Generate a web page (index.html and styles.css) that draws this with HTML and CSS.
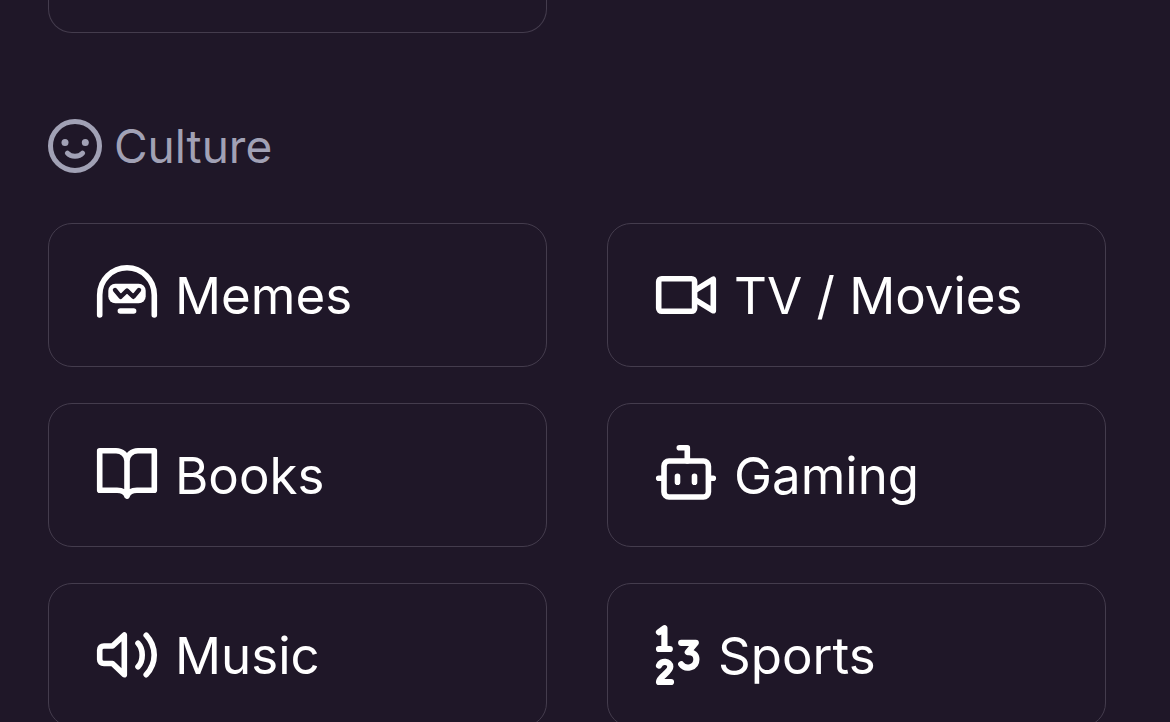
FILE: index.html
```html
<!DOCTYPE html>
<html lang="en">
<head>
<meta charset="utf-8">
<meta name="viewport" content="width=device-width, initial-scale=1">
<title>Culture</title>
<link rel="stylesheet" href="styles.css">
</head>
<body>
<main class="page">
  <div class="grid">
    <div class="card-end"></div>
  </div>
  <section class="section">
    <h2 class="heading">
      <svg class="icon" width="54" height="54" viewBox="0 0 54 54" aria-hidden="true">
        <circle cx="27" cy="27" r="24.5" stroke-width="5"/>
        <circle class="solid" cx="17" cy="23.5" r="3.5"/>
        <circle class="solid" cx="37.3" cy="23.5" r="3.5"/>
        <path d="M19.4 34.2C23 38.4 31 38.4 34.6 34.2" stroke-width="5"/>
      </svg>
      <span>Culture</span>
    </h2>
    <div class="grid">
      <a class="card" href="#memes">
        <svg class="icon" width="60" height="60" viewBox="0 0 60 60" aria-hidden="true">
          <path d="M2.7 50V30A27.3 27.3 0 0 1 57.3 30V50"/>
          <rect class="solid" x="11.3" y="18.8" width="37.4" height="19.4" rx="7"/>
          <path class="cut" d="M18 25L23.7 31.8L30 25.6L36.3 31.8L42 25"/>
          <path d="M23.4 46H36.6"/>
        </svg>
        <span class="label">Memes</span>
      </a>
      <a class="card" href="#tv-movies">
        <svg class="icon" width="60" height="38" viewBox="0 0 60 38" aria-hidden="true">
          <rect x="2.7" y="2.7" width="35.9" height="32.6" rx="3"/>
          <path d="M39 14.3L57.3 3.2V34.8L39 23.7"/>
        </svg>
        <span class="label">TV / Movies</span>
      </a>
      <a class="card" href="#books">
        <svg class="icon" width="60" height="54" viewBox="0 0 60 54" aria-hidden="true">
          <path d="M2.7 2.7H19C25 2.7 30 7 30 13C30 7 35 2.7 41 2.7H57.3V42.3H40C34 42.3 31 45 30 48C29 45 26 42.3 20 42.3H2.7ZM30 13V48"/>
        </svg>
        <span class="label">Books</span>
      </a>
      <a class="card" href="#gaming">
        <svg class="icon" width="60" height="60" viewBox="0 0 60 60" aria-hidden="true">
          <rect x="8" y="16" width="44.4" height="36" rx="5"/>
          <path d="M23.3 2.7H31.3V16M2.7 33.2H7M53 33.2H57.3M21.5 31.4V37.2M38.5 31.4V37.2"/>
        </svg>
        <span class="label">Gaming</span>
      </a>
      <a class="card" href="#music">
        <svg class="icon" width="60" height="46" viewBox="0 0 60 46" aria-hidden="true">
          <path d="M27.3 3V42.7L15.5 31.5H7Q2.7 31.5 2.7 27.5V18Q2.7 14 7 14H15.5ZM41 11.2Q45.2 15.5 45.2 23T41 34.8M49.2 3.2Q57.2 12 57.2 23T49.2 42.7"/>
        </svg>
        <span class="label">Music</span>
      </a>
      <a class="card" href="#sports">
        <svg class="icon bold" width="44" height="60" viewBox="0 0 44 60" aria-hidden="true">
          <path d="M3 7.2L8.4 3.2V24M3 24H13.8M3 40.6C5 35 14.3 35.8 14.3 41.8C14.3 47.5 3 51.5 3 57H15M25.2 17.8H39.8L31.8 27.2C37.5 26.8 40.4 30 40.4 34.2C40.4 43 29.5 45.2 25.2 39.2"/>
        </svg>
        <span class="label">Sports</span>
      </a>
    </div>
  </section>
</main>
</body>
</html>
```
FILE: styles.css
```css
* {
  box-sizing: border-box;
}

body {
  margin: 0;
  height: 100vh;
  overflow: hidden;
  background: #1f1728;
  color: #fff;
  font-family: Inter, "Liberation Sans", sans-serif;
}

.page {
  padding: 0 64px 0 48px;
}

.grid {
  display: grid;
  grid-template-columns: 1fr 1fr;
  gap: 36px 60px;
}

.card-end {
  height: 33px;
  border: 1px solid #443c4d;
  border-top: 0;
  border-radius: 0 0 24px 24px;
}

.section {
  padding-top: 80px;
}

.heading {
  display: flex;
  align-items: center;
  gap: 12px;
  margin: 0 0 44px;
  color: #a1a1b5;
  font-size: 46px;
  font-weight: 400;
  line-height: 66px;
}

.card {
  display: flex;
  align-items: center;
  gap: 18px;
  height: 144px;
  padding: 0 48px;
  border: 1px solid #443c4d;
  border-radius: 24px;
  color: inherit;
  font-size: 51px;
  line-height: 72px;
  text-decoration: none;
  white-space: nowrap;
}

.label {
  padding-top: 2px;
}

.icon {
  flex: none;
  overflow: visible;
  fill: none;
  stroke: currentColor;
  stroke-width: 5.6;
  stroke-linecap: round;
  stroke-linejoin: round;
}

.bold {
  stroke-width: 6.2;
}

.solid {
  fill: currentColor;
  stroke: none;
}

.cut {
  stroke: #1f1728;
  stroke-width: 4.4;
}
```
